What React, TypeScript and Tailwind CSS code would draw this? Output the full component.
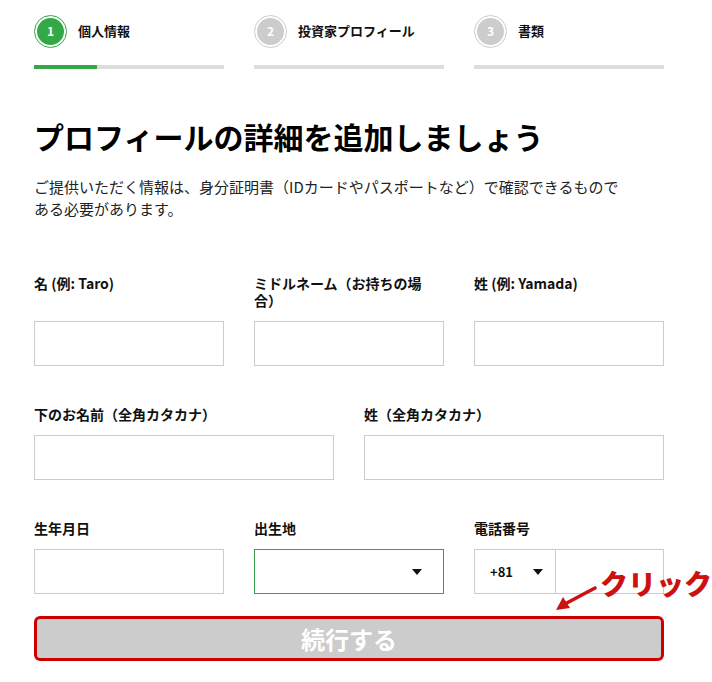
import React from "react";

const steps = [
  { num: 1, label: "個人情報", active: true },
  { num: 2, label: "投資家プロフィール", active: false },
  { num: 3, label: "書類", active: false },
];

const Caret = () => (
  <svg width="10" height="6" viewBox="0 0 10 6" className="shrink-0">
    <path d="M0 0 L10 0 L5 6 Z" fill="#111" />
  </svg>
);

const TextInput = () => (
  <input
    type="text"
    className="w-full h-[45px] border border-[#cccccc] bg-white px-3 text-[14px] outline-none"
  />
);

const Label: React.FC<{ children: React.ReactNode }> = ({ children }) => (
  <label className="block text-[14px] leading-[17px] font-bold text-[#111]">
    {children}
  </label>
);

export default function App() {
  return (
    <div className="relative w-[712px] min-h-[682px] bg-white pl-[34px] pr-[48px] pt-[14px] font-['Noto_Sans_CJK_JP','Liberation_Sans',sans-serif] text-[#111]">
      {/* stepper */}
      <div className="grid grid-cols-3 gap-x-[30px]">
        {steps.map((s) => (
          <div key={s.num}>
            <div className="flex items-center gap-[11px] h-[34px]">
              <div
                className={
                  s.active
                    ? "w-[33px] h-[33px] rounded-full border-[1.5px] border-[#33a847] p-[2px]"
                    : "w-[33px] h-[33px] rounded-full border-[1.5px] border-[#cccccc] p-[2px]"
                }
              >
                <div
                  className={
                    s.active
                      ? "w-full h-full rounded-full bg-[#33a847] flex items-center justify-center text-white text-[12px] font-bold"
                      : "w-full h-full rounded-full bg-[#cccccc] flex items-center justify-center text-white text-[12px] font-bold"
                  }
                >
                  {s.num}
                </div>
              </div>
              <span className="text-[13px] font-bold">{s.label}</span>
            </div>
            <div className="mt-[17px] h-[4px] bg-[#dddddd]">
              {s.active && <div className="h-full w-1/3 bg-[#33a847]" />}
            </div>
          </div>
        ))}
      </div>

      {/* heading */}
      <h1 className="mt-[49px] text-[30px] leading-[36px] font-bold text-black">
        プロフィールの詳細を追加しましょう
      </h1>
      <p className="mt-[22px] max-w-[590px] text-[15px] leading-[22px] text-[#222]">
        ご提供いただく情報は、身分証明書（IDカードやパスポートなど）で確認できるものである必要があります。
      </p>

      {/* row 1 */}
      <div className="mt-[55px] grid grid-cols-3 gap-x-[30px] gap-y-[12px]">
        <Label>名 (例: Taro)</Label>
        <Label>
          ミドルネーム（お持ちの場
          <br />
          合）
        </Label>
        <Label>姓 (例: Yamada)</Label>
        <TextInput />
        <TextInput />
        <TextInput />
      </div>

      {/* row 2 */}
      <div className="mt-[40px] grid grid-cols-2 gap-x-[30px] gap-y-[12px]">
        <Label>下のお名前（全角カタカナ）</Label>
        <Label>姓（全角カタカナ）</Label>
        <TextInput />
        <TextInput />
      </div>

      {/* row 3 */}
      <div className="mt-[40px] grid grid-cols-3 gap-x-[30px] gap-y-[12px]">
        <Label>生年月日</Label>
        <Label>出生地</Label>
        <Label>電話番号</Label>
        <TextInput />
        <div className="h-[45px] border border-[#3a9f4c] bg-white flex items-center justify-end pr-[21px]">
          <Caret />
        </div>
        <div className="flex h-[45px]">
          <div className="w-[82px] shrink-0 border border-[#cccccc] flex items-center justify-between pl-[15px] pr-[12px]">
            <span className="text-[13px] font-bold">+81</span>
            <Caret />
          </div>
          <input
            type="text"
            className="flex-1 min-w-0 h-full border border-l-0 border-[#cccccc] px-2 outline-none"
          />
        </div>
      </div>

      {/* button */}
      <button className="mt-[22px] w-full h-[45px] rounded-[6px] border-[3px] border-[#cc0000] bg-[#cccccc] text-white text-[24px] leading-[30px] font-bold flex items-center justify-center">
        続行する
      </button>

      {/* annotation */}
      <span className="absolute left-[600px] top-[563px] text-[28px] leading-[40px] font-black text-[#cc1111]">
        クリック
      </span>
      <svg
        className="absolute left-[552px] top-[582px]"
        width="48"
        height="32"
        viewBox="0 0 48 32"
      >
        <line x1="43" y1="6" x2="11" y2="23" stroke="#cc1111" strokeWidth="3.5" strokeLinecap="round" />
        <path d="M4 28 L18 26 L11 15 Z" fill="#cc1111" />
      </svg>
    </div>
  );
}
